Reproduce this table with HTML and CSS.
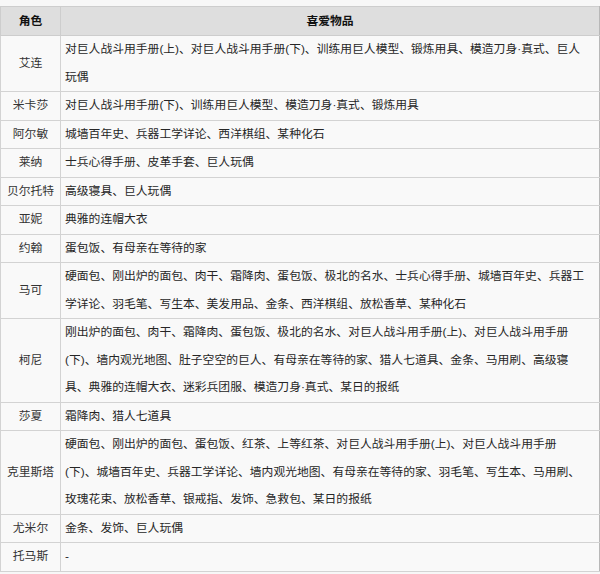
FILE: index.html
```html
<!DOCTYPE html>
<html lang="zh-CN">
<head>
<meta charset="utf-8">
<title>喜爱物品</title>
<link rel="stylesheet" href="styles.css">
</head>
<body>
<table class="gift-table">
  <colgroup>
    <col class="col-name">
    <col class="col-items">
  </colgroup>
  <thead>
    <tr><th>角色</th><th>喜爱物品</th></tr>
  </thead>
  <tbody>
    <tr><td class="name">艾连</td><td class="items">对巨人战斗用手册(上)、对巨人战斗用手册(下)、训练用巨人模型、锻炼用具、模造刀身·真式、巨人玩偶</td></tr>
    <tr><td class="name">米卡莎</td><td class="items">对巨人战斗用手册(下)、训练用巨人模型、模造刀身·真式、锻炼用具</td></tr>
    <tr><td class="name">阿尔敏</td><td class="items">城墙百年史、兵器工学详论、西洋棋组、某种化石</td></tr>
    <tr><td class="name">莱纳</td><td class="items">士兵心得手册、皮革手套、巨人玩偶</td></tr>
    <tr><td class="name">贝尔托特</td><td class="items">高级寝具、巨人玩偶</td></tr>
    <tr><td class="name">亚妮</td><td class="items">典雅的连帽大衣</td></tr>
    <tr><td class="name">约翰</td><td class="items">蛋包饭、有母亲在等待的家</td></tr>
    <tr><td class="name">马可</td><td class="items">硬面包、刚出炉的面包、肉干、霜降肉、蛋包饭、极北的名水、士兵心得手册、城墙百年史、兵器工学详论、羽毛笔、写生本、美发用品、金条、西洋棋组、放松香草、某种化石</td></tr>
    <tr><td class="name">柯尼</td><td class="items">刚出炉的面包、肉干、霜降肉、蛋包饭、极北的名水、对巨人战斗用手册(上)、对巨人战斗用手册(下)、墙内观光地图、肚子空空的巨人、有母亲在等待的家、猎人七道具、金条、马用刷、高级寝具、典雅的连帽大衣、迷彩兵团服、模造刀身·真式、某日的报纸</td></tr>
    <tr><td class="name">莎夏</td><td class="items">霜降肉、猎人七道具</td></tr>
    <tr><td class="name">克里斯塔</td><td class="items">硬面包、刚出炉的面包、蛋包饭、红茶、上等红茶、对巨人战斗用手册(上)、对巨人战斗用手册(下)、城墙百年史、兵器工学详论、墙内观光地图、有母亲在等待的家、羽毛笔、写生本、马用刷、玫瑰花束、放松香草、银戒指、发饰、急救包、某日的报纸</td></tr>
    <tr><td class="name">尤米尔</td><td class="items">金条、发饰、巨人玩偶</td></tr>
    <tr><td class="name">托马斯</td><td class="items">-</td></tr>
  </tbody>
</table>
</body>
</html>
```

FILE: styles.css
```css
html, body {
  margin: 0;
  padding: 0;
  background: #f7f7f7;
}

body {
  font-family: "Liberation Sans", "Noto Sans CJK SC", sans-serif;
  font-size: 11.8px;
  color: #262626;
}

.gift-table {
  margin-top: 6px;
  width: 599px;
  border-collapse: collapse;
  table-layout: fixed;
  background: #f9f9f9;
}

.col-name {
  width: 60px;
}

.col-items {
  width: 539px;
}

.gift-table th {
  background: #dedede;
  color: #111;
  font-weight: bold;
  line-height: 28px;
  padding: 0;
  border: 1px solid #cdcdcd;
  text-align: center;
}

.gift-table td {
  border: 1px solid #d3d3d3;
  line-height: 27.5px;
  padding: 0;
  vertical-align: middle;
}

.gift-table td.name {
  text-align: center;
  color: #333;
}

.gift-table td.items {
  padding: 0 13px 0 4px;
  text-align: left;
}

.gift-table tr > :last-child {
  border-right-color: #b8b8b8;
}
```
